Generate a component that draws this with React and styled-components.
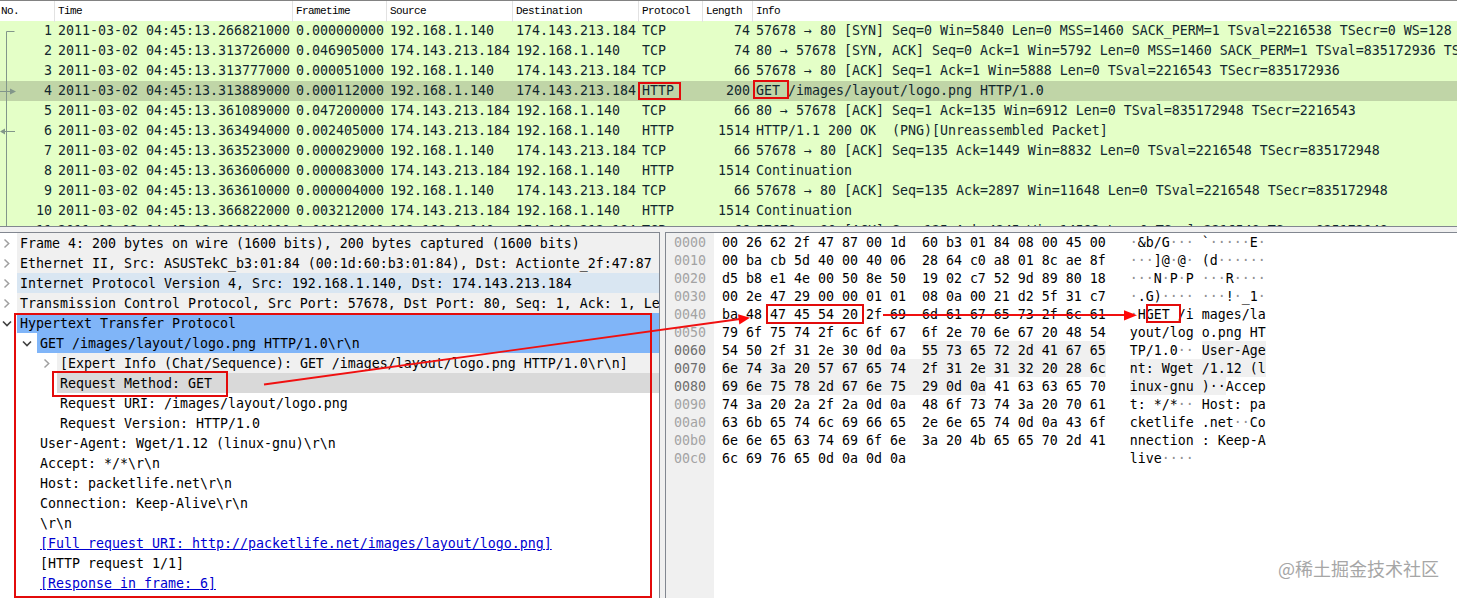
import React from 'react';
import styled, { createGlobalStyle } from 'styled-components';

const GlobalStyle = createGlobalStyle`
    body {
        margin: 0;
        background: #f0f0f0;
    }
    * {
        box-sizing: border-box;
    }
`;

const Window = styled.div`
    position: relative;
    width: 1457px;
    height: 598px;
    overflow: hidden;
    display: flex;
    flex-direction: column;
    gap: 5px;
    background: #f0f0f0;
    font-family: Consolas, 'DejaVu Sans Mono', monospace;
    font-size: 13.29px;
    white-space: pre;
`;

const PacketList = styled.div`
    height: 227px;
    flex: none;
    overflow: hidden;
    border-top: 1px solid #828282;
    border-bottom: 1px solid #828790;
    background: #e4ffc7;
`;

const columns = '55px 238px 94px 126px 126px 64px 50px 1fr';

const HeaderRow = styled.div`
    display: grid;
    grid-template-columns: ${columns};
    height: 20px;
    background: white;
    font-family: 'Liberation Mono', monospace;
    font-size: 11px;
    letter-spacing: -0.6px;
    line-height: 21px;
    color: black;
`;

const HeaderCell = styled.div`
    padding-left: ${props => props.$first ? '1px' : '3px'};
    border-right: ${props => props.$last ? 'none' : '1px solid #e2e2e2'};
`;

const PacketRow = styled.div`
    display: grid;
    grid-template-columns: ${columns};
    height: 20px;
    line-height: 19px;
    color: #12272e;
    background: ${props => props.$selected ? '#c0d5a7' : '#e4ffc7'};
`;

const PacketCell = styled.div`
    padding: 0 3px;
    overflow: hidden;
    text-align: ${props => props.$right ? 'right' : 'left'};
`;

const Panes = styled.div`
    flex: 1;
    min-height: 0;
    display: flex;
    gap: 5px;
`;

const DetailPane = styled.div`
    width: 660px;
    overflow: hidden;
    background: white;
    border-top: 1px solid #828790;
    border-right: 1px solid #828790;
`;

const DetailRow = styled.div`
    display: flex;
    height: 20px;
    padding-left: ${props => props.$level * 20}px;
`;

const Expander = styled.div`
    width: 17px;
    flex: none;
    display: flex;
    align-items: center;
    padding-left: 1px;
`;

const DetailText = styled.div`
    flex: 1;
    min-width: 0;
    overflow: hidden;
    padding: 1px 0 0 3px;
    line-height: 20px;
    color: ${props => props.$link ? '#0000d0' : 'black'};
    text-decoration: ${props => props.$link ? 'underline' : 'none'};
    background: ${props => props.$bg || 'transparent'};
`;

const BytesPane = styled.div`
    flex: 1;
    overflow: hidden;
    display: flex;
    background: white;
    border-top: 1px solid #828790;
    border-left: 1px solid #828790;
    line-height: 20px;
`;

const Gutter = styled.div`
    width: 48px;
    padding-left: 8px;
    background: #f0f0f0;
`;

const Offset = styled.div`
    height: 18px;
    color: ${props => props.$active ? '#6e6e6e' : '#a3a3a3'};
`;

const Dump = styled.div`
    padding-left: ${props => props.$ascii ? '24px' : '8px'};
    color: black;
`;

const DumpLine = styled.div`
    height: 18px;
`;

const Marked = styled.span`
    display: inline-block;
    height: 18px;
    vertical-align: top;
    background: #f0f0f0;
`;

const Dot = styled.span`
    color: #909090;
`;

const RedBox = styled.div`
    position: absolute;
    left: ${props => props.$x}px;
    top: ${props => props.$y}px;
    width: ${props => props.$w}px;
    height: ${props => props.$h}px;
    border: 2px solid #e30b0b;
`;

const Overlay = styled.svg`
    position: absolute;
    left: 0;
    top: 0;
`;

const Watermark = styled.div`
    position: absolute;
    right: 18px;
    bottom: 17px;
    font-family: 'Noto Sans CJK SC', sans-serif;
    font-size: 18px;
    line-height: 26px;
    color: #a6a6a6;
`;

const headers = ['No.', 'Time', 'Frametime', 'Source', 'Destination', 'Protocol', 'Length', 'Info'];

const client = '192.168.1.140';
const server = '174.143.213.184';

const packets = [
    ['1', '266821000', '0.000000000', client, server, 'TCP', '74', '57678 → 80 [SYN] Seq=0 Win=5840 Len=0 MSS=1460 SACK_PERM=1 TSval=2216538 TSecr=0 WS=128'],
    ['2', '313726000', '0.046905000', server, client, 'TCP', '74', '80 → 57678 [SYN, ACK] Seq=0 Ack=1 Win=5792 Len=0 MSS=1460 SACK_PERM=1 TSval=835172936 TSecr=2216538 WS=64'],
    ['3', '313777000', '0.000051000', client, server, 'TCP', '66', '57678 → 80 [ACK] Seq=1 Ack=1 Win=5888 Len=0 TSval=2216543 TSecr=835172936'],
    ['4', '313889000', '0.000112000', client, server, 'HTTP', '200', 'GET /images/layout/logo.png HTTP/1.0'],
    ['5', '361089000', '0.047200000', server, client, 'TCP', '66', '80 → 57678 [ACK] Seq=1 Ack=135 Win=6912 Len=0 TSval=835172948 TSecr=2216543'],
    ['6', '363494000', '0.002405000', server, client, 'HTTP', '1514', 'HTTP/1.1 200 OK  (PNG)[Unreassembled Packet]'],
    ['7', '363523000', '0.000029000', client, server, 'TCP', '66', '57678 → 80 [ACK] Seq=135 Ack=1449 Win=8832 Len=0 TSval=2216548 TSecr=835172948'],
    ['8', '363606000', '0.000083000', server, client, 'HTTP', '1514', 'Continuation'],
    ['9', '363610000', '0.000004000', client, server, 'TCP', '66', '57678 → 80 [ACK] Seq=135 Ack=2897 Win=11648 Len=0 TSval=2216548 TSecr=835172948'],
    ['10', '366822000', '0.003212000', server, client, 'HTTP', '1514', 'Continuation'],
    ['11', '366844000', '0.000022000', client, server, 'TCP', '66', '57678 → 80 [ACK] Seq=135 Ack=4345 Win=14592 Len=0 TSval=2216548 TSecr=835172948'],
];

const details = [
    { level: 0, icon: 'closed', bg: '#f0f0f0', text: 'Frame 4: 200 bytes on wire (1600 bits), 200 bytes captured (1600 bits)' },
    { level: 0, icon: 'closed', bg: '#f0f0f0', text: 'Ethernet II, Src: ASUSTekC_b3:01:84 (00:1d:60:b3:01:84), Dst: Actionte_2f:47:87' },
    { level: 0, icon: 'closed', bg: '#d9e6f2', text: 'Internet Protocol Version 4, Src: 192.168.1.140, Dst: 174.143.213.184' },
    { level: 0, icon: 'closed', bg: '#f0f0f0', text: 'Transmission Control Protocol, Src Port: 57678, Dst Port: 80, Seq: 1, Ack: 1, Len: 134' },
    { level: 0, icon: 'open', bg: '#80b5f8', text: 'Hypertext Transfer Protocol' },
    { level: 1, icon: 'open', bg: '#80b5f8', text: 'GET /images/layout/logo.png HTTP/1.0\\r\\n' },
    { level: 2, icon: 'closed', bg: '#f0f0f0', text: '[Expert Info (Chat/Sequence): GET /images/layout/logo.png HTTP/1.0\\r\\n]' },
    { level: 2, bg: '#d9d9d9', text: 'Request Method: GET' },
    { level: 2, text: 'Request URI: /images/layout/logo.png' },
    { level: 2, text: 'Request Version: HTTP/1.0' },
    { level: 1, text: 'User-Agent: Wget/1.12 (linux-gnu)\\r\\n' },
    { level: 1, text: 'Accept: */*\\r\\n' },
    { level: 1, text: 'Host: packetlife.net\\r\\n' },
    { level: 1, text: 'Connection: Keep-Alive\\r\\n' },
    { level: 1, text: '\\r\\n' },
    { level: 1, link: true, text: '[Full request URI: http://packetlife.net/images/layout/logo.png]' },
    { level: 1, text: '[HTTP request 1/1]' },
    { level: 1, link: true, text: '[Response in frame: 6]' },
];

// hexMark / asciiMark: [from, to) character range of the highlighted field
const dump = [
    { offset: '0000', hex: '00 26 62 2f 47 87 00 1d  60 b3 01 84 08 00 45 00', ascii: '·&b/G··· `·····E·' },
    { offset: '0010', hex: '00 ba cb 5d 40 00 40 06  28 64 c0 a8 01 8c ae 8f', ascii: '···]@·@· (d······' },
    { offset: '0020', hex: 'd5 b8 e1 4e 00 50 8e 50  19 02 c7 52 9d 89 80 18', ascii: '···N·P·P ···R····' },
    { offset: '0030', hex: '00 2e 47 29 00 00 01 01  08 0a 00 21 d2 5f 31 c7', ascii: '·.G)···· ···!·_1·' },
    { offset: '0040', hex: 'ba 48 47 45 54 20 2f 69  6d 61 67 65 73 2f 6c 61', ascii: '·HGET /i mages/la' },
    { offset: '0050', hex: '79 6f 75 74 2f 6c 6f 67  6f 2e 70 6e 67 20 48 54', ascii: 'yout/log o.png HT' },
    { offset: '0060', hex: '54 50 2f 31 2e 30 0d 0a  55 73 65 72 2d 41 67 65', ascii: 'TP/1.0·· User-Age', hexMark: [25, 48], asciiMark: [9, 17] },
    { offset: '0070', hex: '6e 74 3a 20 57 67 65 74  2f 31 2e 31 32 20 28 6c', ascii: 'nt: Wget /1.12 (l', hexMark: [0, 48], asciiMark: [0, 17] },
    { offset: '0080', hex: '69 6e 75 78 2d 67 6e 75  29 0d 0a 41 63 63 65 70', ascii: 'inux-gnu )··Accep', hexMark: [0, 33], asciiMark: [0, 12] },
    { offset: '0090', hex: '74 3a 20 2a 2f 2a 0d 0a  48 6f 73 74 3a 20 70 61', ascii: 't: */*·· Host: pa' },
    { offset: '00a0', hex: '63 6b 65 74 6c 69 66 65  2e 6e 65 74 0d 0a 43 6f', ascii: 'cketlife .net··Co' },
    { offset: '00b0', hex: '6e 6e 65 63 74 69 6f 6e  3a 20 4b 65 65 70 2d 41', ascii: 'nnection : Keep-A' },
    { offset: '00c0', hex: '6c 69 76 65 0d 0a 0d 0a', ascii: 'live····' },
];

const Chevron = ({ open }) => (
    <svg width="13" height="13" viewBox="0 0 13 13" fill="none">
        {open
            ? <path d="M2 4.5 L6 8.5 L10 4.5" stroke="#404040" strokeWidth="1.6" />
            : <path d="M3.5 2.5 L7.7 6.5 L3.5 10.5" stroke="#a0a0a0" strokeWidth="1.5" />}
    </svg>
);

const dimDots = text => text.split(/(·+)/).map((part, i) => (
    part.startsWith('·') ? <Dot key={i}>{part}</Dot> : part
));

const Line = ({ text, mark }) => {
    if (!mark) {
        return <DumpLine>{dimDots(text)}</DumpLine>;
    }
    return (
        <DumpLine>
            {dimDots(text.slice(0, mark[0]))}
            <Marked>{text.slice(mark[0], mark[1])}</Marked>
            {dimDots(text.slice(mark[1]))}
        </DumpLine>
    );
};

const Packets = () => (
    <PacketList>
        <HeaderRow>
            {headers.map((name, i) => (
                <HeaderCell key={name} $first={i === 0} $last={i === headers.length - 1}>{name}</HeaderCell>
            ))}
        </HeaderRow>
        {packets.map(([no, time, delta, src, dst, protocol, length, info]) => (
            <PacketRow key={no} $selected={no === '4'}>
                <PacketCell $right>{no}</PacketCell>
                <PacketCell>{'2011-03-02 04:45:13.' + time}</PacketCell>
                <PacketCell>{delta}</PacketCell>
                <PacketCell>{src}</PacketCell>
                <PacketCell>{dst}</PacketCell>
                <PacketCell>{protocol}</PacketCell>
                <PacketCell $right>{length}</PacketCell>
                <PacketCell>{info}</PacketCell>
            </PacketRow>
        ))}
    </PacketList>
);

const Details = () => (
    <DetailPane>
        {details.map(row => (
            <DetailRow key={row.text} $level={row.level}>
                <Expander>{row.icon && <Chevron open={row.icon === 'open'} />}</Expander>
                <DetailText $bg={row.bg} $link={row.link}>{row.text}</DetailText>
            </DetailRow>
        ))}
    </DetailPane>
);

const Bytes = () => (
    <BytesPane>
        <Gutter>
            {dump.map(row => <Offset key={row.offset} $active={!!row.hexMark}>{row.offset}</Offset>)}
        </Gutter>
        <Dump>
            {dump.map(row => <Line key={row.offset} text={row.hex} mark={row.hexMark} />)}
        </Dump>
        <Dump $ascii>
            {dump.map(row => <Line key={row.offset} text={row.ascii} mark={row.asciiMark} />)}
        </Dump>
    </BytesPane>
);

const Annotations = () => (
    <>
        <Overlay width="1457" height="598" fill="none">
            {/* conversation bracket and request/response arrows */}
            <g stroke="#82968a">
                <path d="M14.5 31.5 H6.5 V226" />
                <path d="M0 91.5 H11" />
                <path d="M4 131.5 H15" />
            </g>
            <g fill="#82968a">
                <path d="M10 88.5 L16 91.5 L10 94.5 Z" />
                <path d="M5 128.5 L0 131.5 L5 134.5 Z" />
            </g>
            <g stroke="#f01010" strokeWidth="1.8">
                <path d="M264 384.5 L740 319" />
                <path d="M883 315 H1126" />
            </g>
            <g fill="#ff0808">
                <path d="M750 317.8 L738 314.3 L739.3 324.6 Z" />
                <path d="M1137 315.3 L1124 310.3 V320.5 Z" />
            </g>
        </Overlay>
        <RedBox $x={638} $y={82} $w={43} $h={18} />
        <RedBox $x={753} $y={80} $w={36} $h={19} />
        <RedBox $x={14} $y={313} $w={638} $h={285} />
        <RedBox $x={52} $y={371} $w={176} $h={26} />
        <RedBox $x={766} $y={304} $w={98} $h={20} />
        <RedBox $x={1146} $y={304} $w={35} $h={19} />
    </>
);

export default function App() {
    return (
        <Window>
            <GlobalStyle />
            <Packets />
            <Panes>
                <Details />
                <Bytes />
            </Panes>
            <Annotations />
            <Watermark>@稀土掘金技术社区</Watermark>
        </Window>
    );
}
